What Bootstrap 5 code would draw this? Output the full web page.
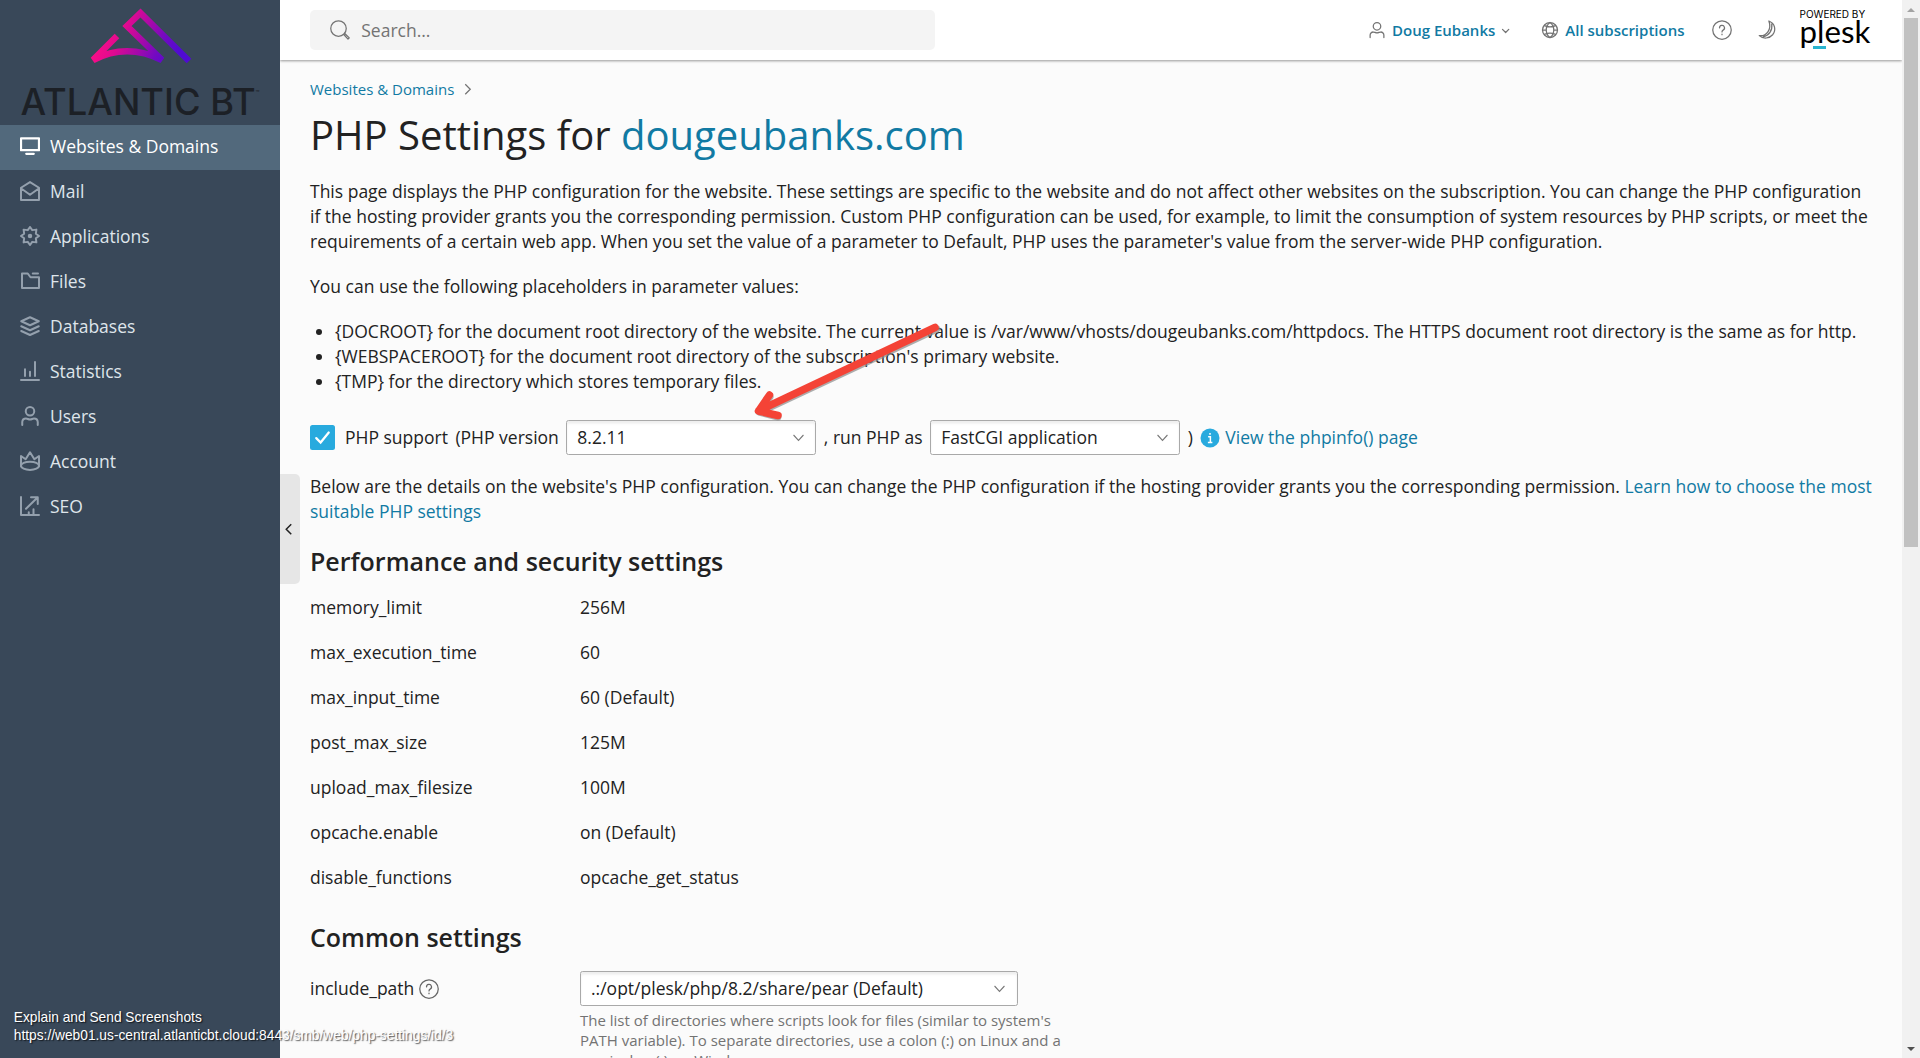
<!DOCTYPE html>
<html lang="en">
<head>
<meta charset="utf-8">
<meta name="viewport" content="width=device-width, initial-scale=1">
<title>PHP Settings for dougeubanks.com</title>
<link href="https://cdn.jsdelivr.net/npm/bootstrap@5.3.0/dist/css/bootstrap.min.css" rel="stylesheet">
<style>
  html, body { height: 100%; }
  body { font-family: "Open Sans", "Noto Sans", sans-serif; color: #222; background: #fbfbfb; overflow: hidden; }
  a { color: #117aa3; text-decoration: none; }
  svg { flex: none; }
  .ico { width: 16px; height: 16px; fill: none; stroke: currentColor; stroke-width: 1.6; stroke-linejoin: round; stroke-linecap: round; }
  .thin { stroke-width: 1; }

  /* The panel is designed at 14px/20px and shown at 125% */
  .panel-app { zoom: 1.25; font-size: 14px; line-height: 20px; min-width: 0; }

  .side { width: 224px; background: #394859; }
  .brand-box { height: 100px; color: #1c2026; }
  .brand-box svg { width: 100%; height: 52px; }
  .brand-name { font-family: Inter, sans-serif; font-size: 29px; font-weight: 500; line-height: 28px; }
  .brand-name sup { font-size: 5px; top: -16px; }
  .side .nav-link { color: #dfe5eb; padding: 7px 16px 9px; gap: 8px; }
  .side .nav-link .ico { color: #94a0ad; }
  .side .nav-link.active { background: #52697c; color: #fff; }
  .side .nav-link.active .ico { color: #fff; }
  .side-toggle { left: 100%; top: 50%; width: 16px; height: 88px; margin-top: -44px; background: #e6e6e6; border: 0; border-radius: 0 4px 4px 0; padding: 0 2px 0 0; color: #222; z-index: 2; }

  .topbar { height: 48px; padding: 0 24px; background: #fff; box-shadow: 0 1px 2px rgba(0,0,0,.4); font-size: 12px; z-index: 1; }
  .topbar a { font-weight: 600; }
  .topbar .ico { color: #737373; }
  .tools { gap: 18px; }
  .tools .apart { margin-left: 2px; }
  .find { width: 500px; height: 32px; background: #f4f4f4; border-radius: 4px; padding: 0 16px; gap: 9px; }
  .find input { font-size: 14px; background: transparent; border: 0; padding: 0; box-shadow: none; }
  .find input:focus { background: transparent; box-shadow: none; }
  .find input::placeholder { color: #737373; opacity: 1; }
  .plesk { color: #000; width: 58px; height: 34px; }
  .plesk small { font: 400 8px/8px Inter, sans-serif; white-space: nowrap; }
  .plesk span { font: 400 25px/20px Lato, sans-serif; }
  .plesk span::after { content: ""; position: absolute; left: 11px; bottom: -4px; width: 10px; height: 2px; background: #28b4d0; }

  .page-body { padding: 15px 24px 24px; }
  .crumbs { font-size: 12px; line-height: 16px; margin-bottom: 9px; }
  h1 { font-size: 32px; line-height: 40px; font-weight: 400; margin-bottom: 15px; }
  h2 { font-size: 20px; line-height: 28px; font-weight: 600; margin-bottom: 13px; }
  p, ul { margin-bottom: 16px; }
  .places { padding-left: 20px; margin-bottom: 21px; }
  .handler { gap: 6px; margin-bottom: 15px; }
  .panel-app .form-check-input { width: 20px; height: 20px; margin: 0 2px 0 0; border-radius: 2px; border: 0; }
  .panel-app .form-check-input:checked { background: #28aade url("data:image/svg+xml,%3Csvg xmlns='http://www.w3.org/2000/svg' viewBox='0 0 20 20'%3E%3Cpath d='M5 10.500 8.500 14 15 6' fill='none' stroke='%23fff' stroke-width='1.800' stroke-linecap='round'/%3E%3C/svg%3E") center / 100%; }
  .panel-app .form-select { width: 200px; height: 28px; font-size: 14px; line-height: 20px; padding: 3px 28px 3px 8px; border: 1px solid #a9a9a9; border-radius: 2px; color: #222; box-shadow: inset 0 2px 2px rgba(0,0,0,.07);
    background: #fff url("data:image/svg+xml,%3Csvg xmlns='http://www.w3.org/2000/svg' viewBox='0 0 10 6'%3E%3Cpath d='M.5.5 5 5 9.5.5' fill='none' stroke='%23777'/%3E%3C/svg%3E") no-repeat right 9px center / 9px 6px; }
  .panel-app .form-select.wide { width: 350px; }
  .settings { margin-bottom: 24px; }
  .settings dt, .key { width: 216px; font-weight: 400; flex: none; }
  .settings dd { margin: 0; }
  .settings > div + div { margin-top: 16px; }
  .hint { max-width: 400px; font-size: 12px; line-height: 16px; color: #737373; margin-top: 3px; }
  .q { color: #666; }

  .scroller { width: 18px; background: #f1f1f1; }
  .scroller svg { width: 8px; height: 18px; }
  .scroller .thumb { width: 14px; height: 50%; background: #c1c1c1; }
  .arrow-note { left: 740px; top: 310px; width: 210px; height: 120px; z-index: 5; pointer-events: none; }
  .stamp { zoom: 1.25; left: 11px; bottom: 11px; font: 11px/14px "Liberation Sans", Arial, sans-serif; color: #fff; text-shadow: 1px 1px 1px rgba(0,0,0,.7); z-index: 5; }
</style>
<script src="https://cdn.jsdelivr.net/npm/bootstrap@5.3.0/dist/js/bootstrap.bundle.min.js"></script>
</head>
<body class="d-flex position-relative">
<div class="panel-app d-flex flex-grow-1">
  <aside class="side position-relative flex-shrink-0">
    <div class="brand-box d-flex flex-column align-items-center">
      <svg viewBox="0 0 280 65" preserveAspectRatio="xMidYMid meet" aria-hidden="true">
        <defs><linearGradient id="bt" gradientUnits="userSpaceOnUse" x1="105" y1="25" x2="175" y2="60"><stop offset="0" stop-color="#fb0d86"/><stop offset=".25" stop-color="#e10a90"/><stop offset=".75" stop-color="#7209c2"/><stop offset="1" stop-color="#500bd2"/></linearGradient></defs>
        <path d="M117 36 93 60C116 48 140 49 162 60L127 26 140.500 13 189 61" fill="none" stroke="url(#bt)" stroke-width="6.500" stroke-miterlimit="2"/>
      </svg>
      <div class="brand-name text-nowrap mt-auto mb-1">ATLANTIC BT<sup>™</sup></div>
    </div>
    <nav class="nav flex-column">
      <a class="nav-link active d-flex align-items-center" href="#"><svg class="ico" viewBox="0 0 16 16"><path d="M.8 1.800h14.400v9.400H.800zM5 14.200h6" stroke-width="1.800"/></svg>Websites &amp; Domains</a>
      <a class="nav-link d-flex align-items-center" href="#"><svg class="ico" viewBox="0 0 16 16"><path d="M.8 5.400 8 .9l7.200 4.500v9.800H.800zM1 6l7 5 7-5"/></svg>Mail</a>
      <a class="nav-link d-flex align-items-center" href="#"><svg class="ico" viewBox="0 0 16 16"><path d="M8 .8 9.800 3.300 13.100 2.900 12.700 6.200 15.200 8 12.700 9.800 13.100 13.100 9.800 12.700 8 15.200 6.200 12.700 2.900 13.100 3.300 9.800.8 8 3.300 6.200 2.900 2.900 6.200 3.300z"/><circle cx="8" cy="8" r="1.800" fill="currentColor" stroke="none"/></svg>Applications</a>
      <a class="nav-link d-flex align-items-center" href="#"><svg class="ico" viewBox="0 0 16 16"><path d="M1.600 2h4.600l2.200 3h6.800v8.600H1.600zM10.200 2h4.200"/></svg>Files</a>
      <a class="nav-link d-flex align-items-center" href="#"><svg class="ico" viewBox="0 0 16 16"><path d="M8 1 15 4.200 8 7.400 1 4.200zM1 8.200l7 3.200 7-3.200M1 12l7 3.200 7-3.200"/></svg>Databases</a>
      <a class="nav-link d-flex align-items-center" href="#"><svg class="ico" viewBox="0 0 16 16"><path d="M.8 15.200h14.400M4 6.500v5.500M8 8.500V12M12 .8V12"/></svg>Statistics</a>
      <a class="nav-link d-flex align-items-center" href="#"><svg class="ico" viewBox="0 0 16 16"><circle cx="8" cy="4.200" r="3.400"/><path d="M1.800 15.200v-2.400A3 3 0 0 1 4.800 10c1.200 0 1.800.8 3.200.8S10 10 11.200 10a3 3 0 0 1 3 2.800v2.400"/></svg>Users</a>
      <a class="nav-link d-flex align-items-center" href="#"><svg class="ico" viewBox="0 0 16 16"><path d="M.8 12.200V4L4.500 6.600 8 1l3.500 5.600L15.200 4v8.200"/><ellipse cx="8" cy="11.800" rx="7.200" ry="3.300"/></svg>Account</a>
      <a class="nav-link d-flex align-items-center" href="#"><svg class="ico" viewBox="0 0 16 16"><path d="M.8.800v14.400h14.400M4.800 10.200 14 1.200M8.800 1H14.200V6.400M7 14.500V13M10.800 14.500V10.500"/></svg>SEO</a>
    </nav>
    <button class="side-toggle position-absolute d-flex align-items-center justify-content-center" type="button" aria-label="Collapse sidebar"><svg width="6" height="10" viewBox="0 0 6 10" fill="none" stroke="currentColor" stroke-width="1.200"><path d="M5 1 1 5l4 4"/></svg></button>
  </aside>

  <div class="d-flex flex-column flex-grow-1 overflow-hidden">
    <header class="topbar d-flex align-items-center position-relative flex-shrink-0">
      <label class="find d-flex align-items-center">
        <svg class="ico thin" viewBox="0 0 16 16"><circle cx="6.800" cy="6.800" r="6.200"/><path d="m11 11.600 3.400 3.700 1-1-3.600-3.500"/></svg>
        <input class="form-control" type="search" placeholder="Search..." aria-label="Search">
      </label>
      <div class="tools d-flex align-items-center ms-auto">
        <a class="d-flex align-items-center" href="#"><svg class="ico thin me-1" viewBox="0 0 16 16"><circle cx="8" cy="5" r="3"/><path d="M2.500 14v-1.800A2.500 2.500 0 0 1 5 9.600c1.200 0 1.600.7 3 .7s1.800-.7 3-.7a2.500 2.500 0 0 1 2.500 2.600V14"/></svg>Doug Eubanks<svg class="ico thin" viewBox="0 0 16 16"><path d="M6 7.500 8.500 10 11 7.500"/></svg></a>
        <a class="apart d-flex align-items-center" href="#"><svg class="ico thin me-1" viewBox="0 0 16 16"><circle cx="8" cy="8" r="6"/><path d="M8 2C5.800 3.500 5 5.500 5 8s.8 4.500 3 6c2.200-1.500 3-3.500 3-6s-.8-4.500-3-6zM3.500 4.500c3 1.300 6 1.300 9 0M3.500 11.500c3-1.300 6-1.300 9 0M2 8h3M11 8h3"/></svg>All subscriptions</a>
        <a class="d-flex ms-1" href="#" aria-label="Help"><svg class="ico thin" viewBox="0 0 16 16"><circle cx="8" cy="8" r="7.400"/><path d="M6 6.300a2 2 0 1 1 2.900 1.800c-.7.400-.9.700-.9 1.400M8 11.300v.4"/></svg></a>
        <button class="apart btn border-0 p-0 d-flex" type="button" aria-label="Dark mode"><svg class="ico thin" viewBox="0 0 16 16"><path d="M9.500.8C14.500 2.800 15.500 8 12.500 11.800 9.800 15 5 15.300 1.800 12.500 7.500 13.300 12 7.500 9.500.8zM11.800 3.200c.8 5-2.300 9.300-6.800 10.200"/></svg></button>
        <div class="plesk d-flex flex-column"><small>POWERED BY</small><span class="position-relative">plesk</span></div>
      </div>
    </header>

    <main class="page-body">
      <nav class="crumbs d-flex align-items-center" aria-label="Breadcrumb"><a href="#">Websites &amp; Domains</a><svg class="ms-2" width="8" height="10" viewBox="0 0 8 10" fill="none" stroke="#737373"><path d="M1 1 5 5 1 9"/></svg></nav>
      <h1>PHP Settings for <a href="#">dougeubanks.com</a></h1>
      <p>This page displays the PHP configuration for the website. These settings are specific to the website and do not affect other websites on the subscription. You can change the PHP configuration if the hosting provider grants you the corresponding permission. Custom PHP configuration can be used, for example, to limit the consumption of system resources by PHP scripts, or meet the requirements of a certain web app. When you set the value of a parameter to Default, PHP uses the parameter's value from the server-wide PHP configuration.</p>
      <p>You can use the following placeholders in parameter values:</p>
      <ul class="places">
        <li>{DOCROOT} for the document root directory of the website. The current value is /var/www/vhosts/dougeubanks.com/httpdocs. The HTTPS document root directory is the same as for http.</li>
        <li>{WEBSPACEROOT} for the document root directory of the subscription's primary website.</li>
        <li>{TMP} for the directory which stores temporary files.</li>
      </ul>
      <div class="handler d-flex align-items-center">
        <input class="form-check-input" type="checkbox" id="php" checked>
        <label for="php">PHP support</label>
        <label for="ver">(PHP version</label>
        <select class="form-select" id="ver"><option>8.2.11</option></select>
        <label for="run">, run PHP as</label>
        <select class="form-select" id="run"><option>FastCGI application</option></select>
        <span>)</span>
        <a class="d-flex align-items-center gap-1" href="#"><svg width="16" height="16" viewBox="0 0 16 16"><circle cx="8" cy="8" r="7.600" fill="#28aade"/><path d="M6.500 7H8.300v4.500M6.300 11.500h3.600M8 4v1.300" fill="none" stroke="#fff" stroke-width="1.200"/></svg>View the phpinfo() page</a>
      </div>
      <p>Below are the details on the website's PHP configuration. You can change the PHP configuration if the hosting provider grants you the corresponding permission. <a href="#">Learn how to choose the most suitable PHP settings</a></p>

      <h2>Performance and security settings</h2>
      <dl class="settings">
        <div class="d-flex"><dt>memory_limit</dt><dd>256M</dd></div>
        <div class="d-flex"><dt>max_execution_time</dt><dd>60</dd></div>
        <div class="d-flex"><dt>max_input_time</dt><dd>60 (Default)</dd></div>
        <div class="d-flex"><dt>post_max_size</dt><dd>125M</dd></div>
        <div class="d-flex"><dt>upload_max_filesize</dt><dd>100M</dd></div>
        <div class="d-flex"><dt>opcache.enable</dt><dd>on (Default)</dd></div>
        <div class="d-flex"><dt>disable_functions</dt><dd>opcache_get_status</dd></div>
      </dl>

      <h2>Common settings</h2>
      <div class="d-flex">
        <div class="key d-flex align-items-center align-self-start gap-1 pt-1"><label for="inc">include_path</label><svg class="ico thin q" viewBox="0 0 16 16"><circle cx="8" cy="8" r="7.400"/><path d="M6 6.300a2 2 0 1 1 2.900 1.800c-.7.400-.9.700-.9 1.400M8 11.300v.4"/></svg></div>
        <div>
          <select class="form-select wide" id="inc"><option>.:/opt/plesk/php/8.2/share/pear (Default)</option></select>
          <div class="hint">The list of directories where scripts look for files (similar to system's PATH variable). To separate directories, use a colon (:) on Linux and a semicolon (;) on Windows.</div>
        </div>
      </div>
    </main>
  </div>
</div>

<div class="scroller d-flex flex-column align-items-center flex-shrink-0" aria-hidden="true">
  <svg viewBox="0 0 8 18"><path d="M0 12 4 8l4 4z" fill="#a3a3a3"/></svg>
  <div class="thumb"></div>
  <svg class="mt-auto" viewBox="0 0 8 18"><path d="M0 7h8l-4 4z" fill="#505050"/></svg>
</div>

<svg class="arrow-note position-absolute" viewBox="0 0 210 120" fill="none" stroke-linecap="round" stroke-linejoin="round" aria-hidden="true">
  <g stroke="#8a8a8a" stroke-opacity=".7" stroke-width="7"><path d="M197 19 20 102M30 87 19 102 38 107"/></g>
  <g stroke="#f44336" stroke-width="7.500"><path d="M195 17.500 19 100.500M29.500 85 18.500 101 38 105.500"/></g>
</svg>
<div class="stamp position-absolute">Explain and Send Screenshots<br>https://web01.us-central.atlanticbt.cloud:8443/smb/web/php-settings/id/3</div>
</body>
</html>
